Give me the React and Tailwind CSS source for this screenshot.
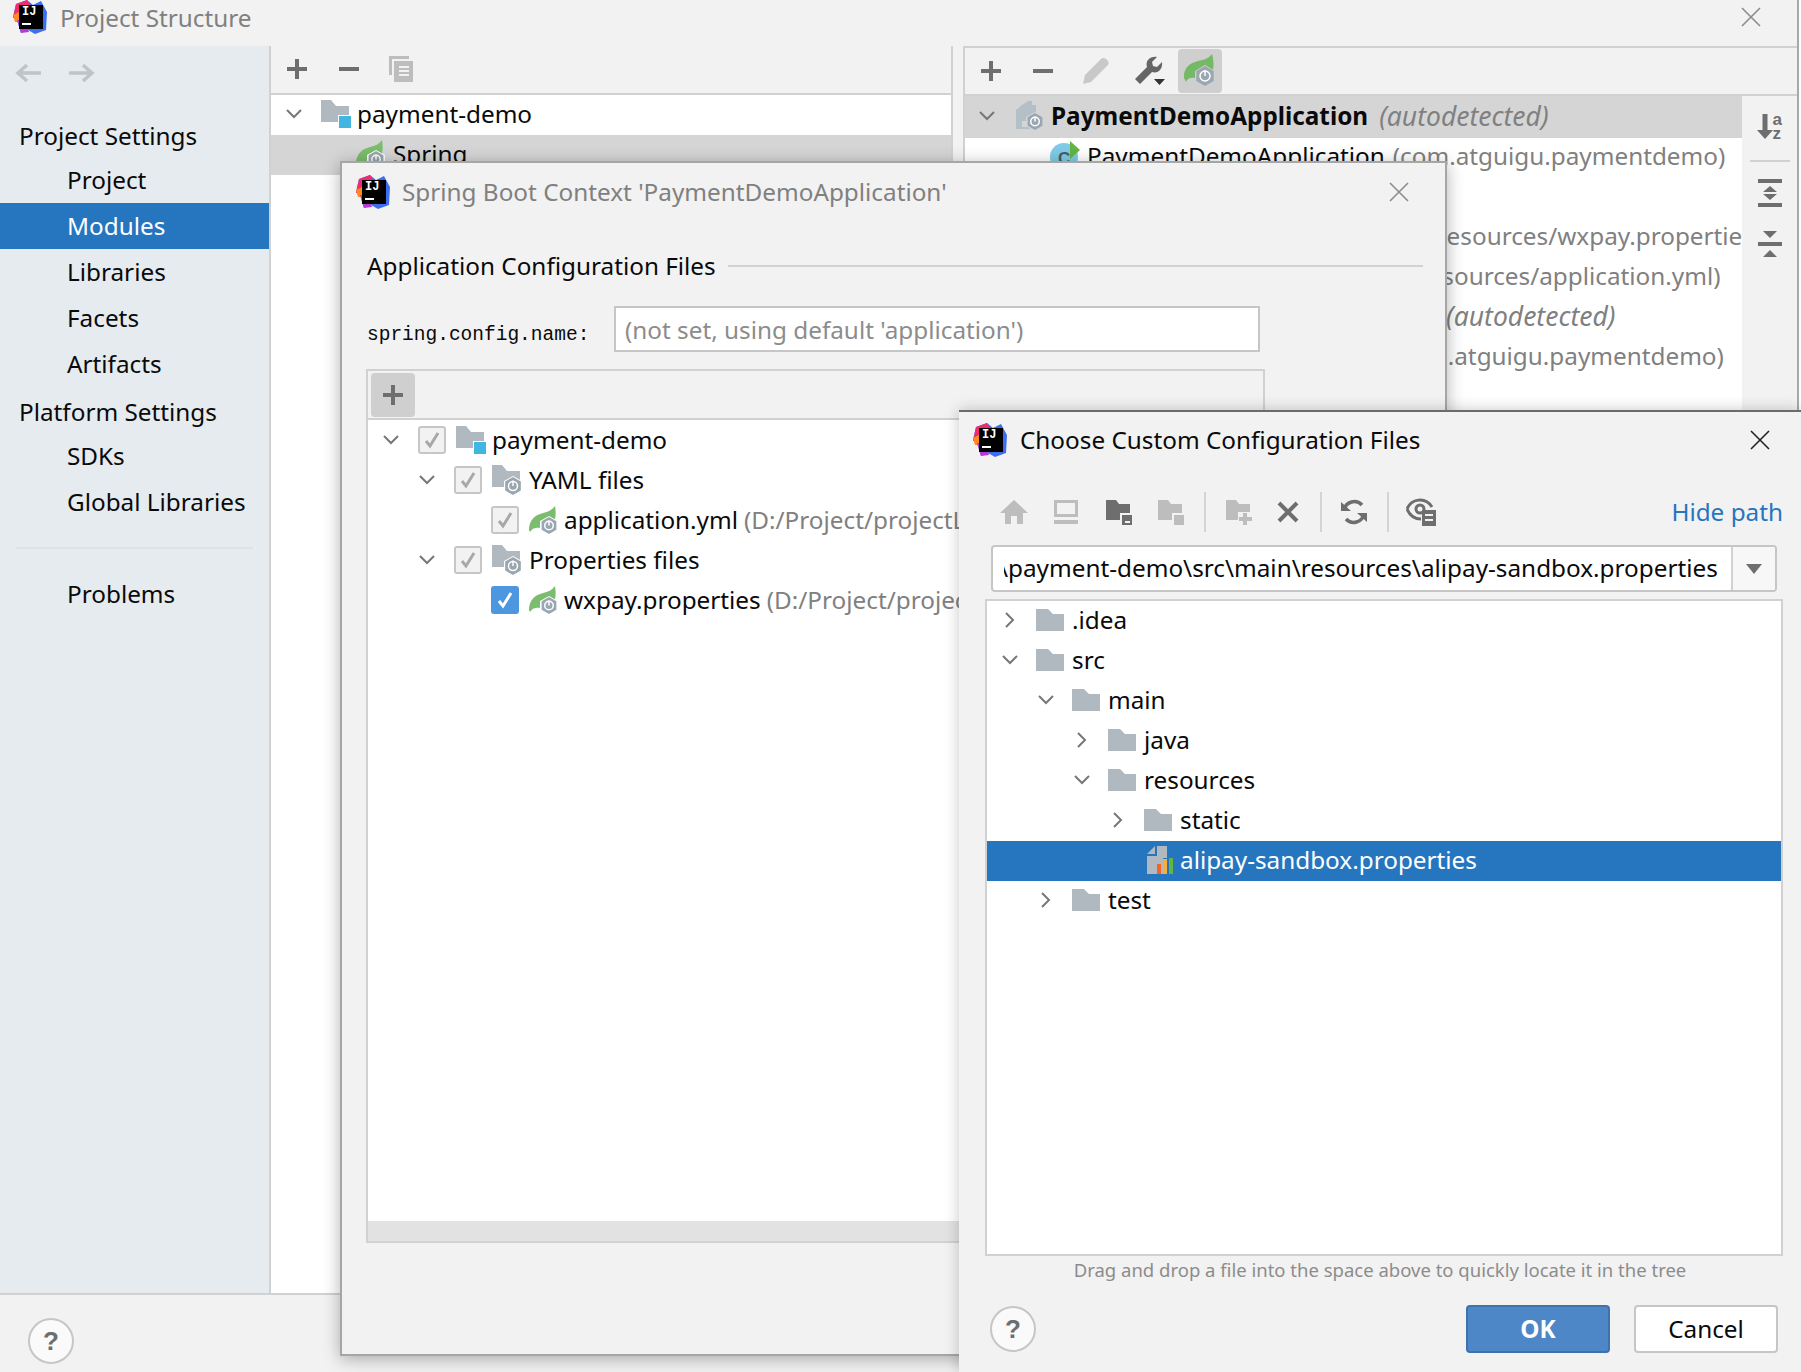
import { useState } from 'react';

const GRAY = '#6e6e6e';
const LIGHT = '#bdbdbd';

const Logo = () => (
    <span className="relative block w-[34px] h-[34px] shrink-0">
        <svg viewBox="0 0 34 34" className="absolute inset-0 w-full h-full">
            <path d="M3 4 L14 0 L20 5 L28 1 L34 12 L33 30 L22 34 L15 30 L8 33 L4 20 L0 17 Z" fill="#3b6ff0" />
            <path d="M3 4 L14 0 L18 6 L6 18 L0 18 Z" fill="#f02b6e" />
            <path d="M0 15 L6 12 L6 22 L2 22 Z" fill="#ff8a1f" />
            <path d="M4 20 L12 20 L16 32 L8 33 Z" fill="#b23ad6" />
            <rect x="6" y="5" width="24" height="24" fill="#000" />
            <rect x="9" y="23" width="9" height="2" fill="#fff" />
        </svg>
        <span className="absolute left-[9px] top-[5px] text-[12px] leading-[14px] font-bold text-white font-['Liberation_Mono',monospace]">IJ</span>
    </span>
);

const Close = ({ color = '#8c8c8c' }) => (
    <svg width="22" height="22" viewBox="0 0 22 22" className="shrink-0">
        <path d="M2 2 L20 20 M20 2 L2 20" stroke={color} strokeWidth="1.6" />
    </svg>
);

const Chevron = ({ open }) => (
    <svg width="18" height="18" viewBox="0 0 18 18" className="shrink-0">
        {open
            ? <path d="M2 5 L9 12 L16 5" fill="none" stroke="#777" strokeWidth="2" />
            : <path d="M5 2 L12 9 L5 16" fill="none" stroke="#777" strokeWidth="2" />}
    </svg>
);

const Folder = () => (
    <svg width="28" height="22" viewBox="0 0 28 22" className="shrink-0">
        <path d="M0 0 H12 L17 5 H28 V22 H0 Z" fill="#afb9bf" />
    </svg>
);

const ModuleFolder = () => (
    <svg width="30" height="28" viewBox="0 0 30 28" className="shrink-0">
        <path d="M0 0 H10 L15 6 H28 V22 H0 Z" fill="#afb9bf" />
        <rect x="17" y="15" width="13" height="13" fill="#fff" />
        <rect x="18" y="16" width="12" height="12" fill="#40b6e0" />
    </svg>
);

const Hex = ({ cx, cy, r = 9, fill = '#9aa7b0' }) => {
    const pts = [[0, -1], [0.87, -0.5], [0.87, 0.5], [0, 1], [-0.87, 0.5], [-0.87, -0.5]]
        .map(([x, y]) => `${cx + x * r},${cy + y * r}`).join(' ');
    return (
        <>
            <polygon points={pts} fill={fill} />
            <circle cx={cx} cy={cy} r={r * 0.5} fill="none" stroke="#fff" strokeWidth="1.5" />
            <path d={`M${cx} ${cy - r * 0.6} V${cy}`} stroke="#fff" strokeWidth="1.5" />
        </>
    );
};

const SpringFolder = () => (
    <svg width="30" height="30" viewBox="0 0 30 30" className="shrink-0">
        <path d="M0 0 H10 L15 6 H28 V22 H0 Z" fill="#afb9bf" />
        <polygon points="21,11 30,16 30,26 21,31 12,26 12,16" fill="#fff" />
        <Hex cx={21} cy={21} r={9} />
    </svg>
);

const Leaf = () => (
    <svg width="30" height="28" viewBox="0 0 30 28" className="shrink-0">
        <path d="M0 24 C0 14 6 9 14 7 C19 6 23 4 26 0 C27 6 27 12 25 16 L12 22 C7 21 3 22 1 26 Z" fill="#7bbd6e" />
        <polygon points="20,10 29,15 29,24 20,29 11,24 11,15" fill="#fff" />
        <Hex cx={20} cy={19.5} r={8.5} />
    </svg>
);

const BigLeaf = () => (
    <svg width="34" height="34" viewBox="0 0 34 34">
        <path d="M1 24 C0 14 7 9 15 7 C21 6 26 4 29 0 C31 7 31 14 29 19 L12 24 C7 23 4 25 3 28 Z" fill="#75b966" />
        <polygon points="22,11 32,17 32,27 22,33 12,27 12,17" fill="#d0d0d0" />
        <Hex cx={22} cy={22} r={10} />
    </svg>
);

const Doc = () => (
    <svg width="30" height="30" viewBox="0 0 30 30" className="shrink-0">
        <path d="M6 4 L12 0 H16 V4 H20 V20 H6 Z" fill="#b4c0c8" />
        <path d="M0 9 L6 4 V26 H14 V28 H0 Z" fill="#b4c0c8" />
        <polygon points="19,11 28,16 28,25 19,30 10,25 10,16" fill="#d5d5d5" />
        <Hex cx={19} cy={20.5} r={8.5} />
    </svg>
);

const ClassIcon = () => (
    <svg width="30" height="30" viewBox="0 0 30 30" className="shrink-0">
        <circle cx="14" cy="16" r="14" fill="#7fcbe8" />
        <path d="M20 0 L30 9 L20 18 Z" fill="#62b543" />
        <text x="8" y="23" fontSize="17" fontWeight="700" fill="#4a5a63" fontFamily="Liberation Sans, sans-serif">C</text>
    </svg>
);

const Plus = ({ color = GRAY }) => (
    <svg width="20" height="20" viewBox="0 0 20 20" className="shrink-0">
        <path d="M8 0 H12 V8 H20 V12 H12 V20 H8 V12 H0 V8 H8 Z" fill={color} />
    </svg>
);

const Minus = () => (
    <svg width="20" height="20" viewBox="0 0 20 20" className="shrink-0">
        <rect x="0" y="8" width="20" height="4" fill={GRAY} />
    </svg>
);

const Copy = () => (
    <svg width="24" height="26" viewBox="0 0 24 26" className="shrink-0">
        <path d="M0 0 H20 V3 H3 V19 H0 Z" fill={LIGHT} />
        <path d="M5 5 H24 V26 H5 Z" fill={LIGHT} />
        <path d="M10 11 H20 M10 15 H20 M10 19 H20" stroke="#f2f2f2" strokeWidth="2" />
    </svg>
);

const Pencil = () => (
    <svg width="28" height="28" viewBox="0 0 28 28" className="shrink-0">
        <path d="M1 27 L3 18 L19 2 Q21 0 24 2 Q28 5 26 8 L9 25 Z" fill="#c8c8c8" />
    </svg>
);

const WrenchIcon = () => (
    <svg width="32" height="30" viewBox="0 0 32 30" className="shrink-0">
        <path d="M1 23 L13 11 C11 5 16 0 23 1 L18 6 L19 10 L23 11 L28 6 C29 13 24 18 18 16 L6 28 Z" fill="#666" />
        <path d="M20 23 H31 L25.5 29 Z" fill="#333" />
    </svg>
);

const ArrowIcon = ({ flip }) => (
    <svg width="26" height="20" viewBox="0 0 26 20" className={flip ? 'shrink-0 -scale-x-100' : 'shrink-0'}>
        <path d="M12 2 L3 10 L12 18 M3 10 H26" fill="none" stroke="#bfc4c8" strokeWidth="3.5" />
    </svg>
);

const SortIcon = () => (
    <span className="relative block w-[26px] h-[26px]">
        <svg width="16" height="26" viewBox="0 0 16 26" className="absolute left-0 top-0">
            <path d="M5.5 0 H10.5 V16 H16 L8 25 L0 16 H5.5 Z" fill={GRAY} />
        </svg>
        <span className="absolute left-[16px] -top-[1px] text-[17px] leading-[14px] font-bold text-[#6e6e6e] font-['Liberation_Sans',sans-serif]">a<br />z</span>
    </span>
);

const ExpandIcon = () => (
    <svg width="24" height="28" viewBox="0 0 24 28">
        <rect width="24" height="4" fill={GRAY} />
        <rect y="24" width="24" height="4" fill={GRAY} />
        <path d="M12 7 L19 13 H5 Z M5 15 H19 L12 21 Z" fill={GRAY} />
    </svg>
);

const CollapseIcon = () => (
    <svg width="24" height="26" viewBox="0 0 24 26">
        <rect y="11" width="24" height="4" fill={GRAY} />
        <path d="M5 0 H19 L12 7 Z M12 19 L19 26 H5 Z" fill={GRAY} />
    </svg>
);

const Check = ({ on }) => (
    <span className={on
        ? 'w-[28px] h-[28px] shrink-0 rounded-[3px] bg-[#4c97e0] flex items-center justify-center'
        : 'w-[28px] h-[28px] shrink-0 rounded-[3px] border-2 border-[#c6c6c6] bg-[#f2f2f2] flex items-center justify-center'}>
        <svg width="18" height="18" viewBox="0 0 18 18">
            <path d="M3 10 L7 15 L15 2" fill="none" stroke={on ? '#fff' : '#a8a8a8'} strokeWidth="3" />
        </svg>
    </span>
);

const Help = () => (
    <span className="w-[46px] h-[46px] rounded-full border-2 border-[#c6c6c6] bg-[#fafafa] flex items-center justify-center text-[26px] font-bold text-[#6e6e6e] font-['Liberation_Sans',sans-serif]">?</span>
);

const IconFolderBadge = ({ color, badge }) => (
    <svg width="26" height="25" viewBox="0 0 26 25" className="shrink-0">
        <path d="M0 0 H10 L13 4 H24 V20 H0 Z" fill={color} />
        {badge === 'plus' && (
            <>
                <rect x="12" y="12" width="14" height="13" fill="#f2f2f2" />
                <path d="M17 13 H21 V17 H26 V21 H21 V25 H17 V21 H13 V17 H17 Z" fill={color} />
            </>
        )}
        {badge === 'square' && (
            <>
                <rect x="14" y="13" width="12" height="12" fill="#f2f2f2" />
                <rect x="16" y="15" width="10" height="10" fill={color} />
                {color === GRAY && <rect x="19" y="21" width="5" height="2" fill="#f2f2f2" />}
            </>
        )}
    </svg>
);

const Home = () => (
    <svg width="28" height="24" viewBox="0 0 28 24" className="shrink-0">
        <path d="M14 0 L28 13 H23 V24 H17 V16 H11 V24 H5 V13 H0 Z" fill={LIGHT} />
    </svg>
);

const Monitor = () => (
    <svg width="24" height="24" viewBox="0 0 24 24" className="shrink-0">
        <path d="M1.5 1.5 H22.5 V15.5 H1.5 Z" fill="none" stroke={LIGHT} strokeWidth="3" />
        <rect y="20" width="24" height="4" fill={LIGHT} />
    </svg>
);

const Cross = () => (
    <svg width="22" height="22" viewBox="0 0 22 22" className="shrink-0">
        <path d="M2 2 L20 20 M20 2 L2 20" stroke={GRAY} strokeWidth="4" />
    </svg>
);

const Refresh = () => (
    <svg width="26" height="26" viewBox="0 0 26 26" className="shrink-0">
        <path d="M3 11 A10.5 10.5 0 0 1 21 6" fill="none" stroke={GRAY} strokeWidth="3.5" />
        <path d="M23 15 A10.5 10.5 0 0 1 5 20" fill="none" stroke={GRAY} strokeWidth="3.5" />
        <path d="M0 3 L10 12 H0 Z M26 23 L16 14 H26 Z" fill={GRAY} />
    </svg>
);

const EyeDoc = () => (
    <svg width="30" height="28" viewBox="0 0 30 28" className="shrink-0">
        <path d="M1 11 C5 1 19 -2 26 9" fill="none" stroke={GRAY} strokeWidth="3" />
        <path d="M1 11 C4 18 9 21 15 21" fill="none" stroke={GRAY} strokeWidth="3" />
        <circle cx="14" cy="11" r="4" fill="none" stroke={GRAY} strokeWidth="3" />
        <rect x="16" y="12" width="14" height="16" fill={GRAY} />
        <path d="M19 17 H27 M19 22 H27" stroke="#f2f2f2" strokeWidth="2" />
    </svg>
);

const ToolSep = () => <span className="block w-[2px] h-[40px] bg-[#d4d4d4] shrink-0" />;

const Row = ({ className, children }) => (
    <div className={`h-[40px] flex items-center whitespace-nowrap ${className}`}>{children}</div>
);

const sidebarTop = ['Project', 'Modules', 'Libraries', 'Facets', 'Artifacts'];

const SideItem = ({ label, active }) => (
    <div className={active
        ? 'h-[46px] flex items-center pl-[67px] bg-[#2675bf] text-white'
        : 'h-[46px] flex items-center pl-[67px]'}>{label}</div>
);

function MainWindow() {
    return (
        <div className="w-[1797px] h-[1372px] flex flex-col bg-[#f2f2f2]">
            <div className="h-[46px] shrink-0 flex items-start pl-[13px] pr-[35px] pt-0">
                <Logo />
                <span className="ml-[13px] mt-[2px] text-[#808080]">Project Structure</span>
                <span className="ml-auto mt-[6px]"><Close /></span>
            </div>
            <div className="h-[1247px] shrink-0 flex">
                <div className="w-[271px] shrink-0 bg-[#e6ebef] border-r-2 border-[#d1d1d1]">
                    <div className="h-[68px] flex items-center gap-[28px] pl-[15px] pb-[14px]">
                        <ArrowIcon />
                        <ArrowIcon flip />
                    </div>
                    <div className="h-[43px] flex items-center pl-[19px] pt-[1px]">Project Settings</div>
                    {sidebarTop.map(label => <SideItem key={label} label={label} active={label === 'Modules'} />)}
                    <div className="h-[46px] flex items-center pl-[19px] pt-[4px]">Platform Settings</div>
                    <SideItem label="SDKs" />
                    <SideItem label="Global Libraries" />
                    <div className="h-[2px] my-[22px] mx-[16px] bg-[#dde2e6]" />
                    <SideItem label="Problems" />
                </div>

                <div className="w-[682px] shrink-0 flex flex-col border-r-2 border-[#d1d1d1]">
                    <div className="h-[49px] shrink-0 flex items-center pl-[16px] pb-[2px] border-b-2 border-[#d1d1d1]">
                        <Plus />
                        <span className="ml-[32px]"><Minus /></span>
                        <span className="ml-[30px]"><Copy /></span>
                    </div>
                    <div className="flex-1 bg-white">
                        <Row className="pl-[14px] pb-[2px]">
                            <Chevron open />
                            <span className="ml-[18px]"><ModuleFolder /></span>
                            <span className="ml-[6px]">payment-demo</span>
                        </Row>
                        <Row className="pl-[85px] pb-[2px] bg-[#d5d5d5]">
                            <Leaf />
                            <span className="ml-[7px]">Spring</span>
                        </Row>
                    </div>
                </div>

                <div className="flex-1 ml-[10px] flex flex-col border-l-2 border-[#d1d1d1] min-w-0">
                    <div className="h-[50px] shrink-0 flex items-center pl-[16px] border-t-2 border-b-2 border-[#d1d1d1]">
                        <Plus />
                        <span className="ml-[32px]"><Minus /></span>
                        <span className="ml-[29px]"><Pencil /></span>
                        <span className="ml-[24px]"><WrenchIcon /></span>
                        <span className="ml-[12px] w-[44px] h-[44px] rounded-[4px] bg-[#cfcfcf] flex items-center justify-center"><BigLeaf /></span>
                    </div>
                    <div className="flex-1 flex min-h-0">
                        <div className="w-[777px] shrink-0 bg-white overflow-hidden">
                            <div className="h-[42px] flex items-center pl-[13px] pb-[2px] bg-[#d5d5d5] whitespace-nowrap">
                                <Chevron open />
                                <span className="ml-[20px]"><Doc /></span>
                                <span className="ml-[5px] font-bold">PaymentDemoApplication</span>
                                <span className="ml-[11px] italic text-[26.5px] text-[#808080]">(autodetected)</span>
                            </div>
                            <Row className="pl-[85px] pb-[4px]">
                                <ClassIcon />
                                <span className="ml-[7px]">PaymentDemoApplication</span>
                                <span className="ml-[8px] text-[#808080]">(com.atguigu.paymentdemo)</span>
                            </Row>
                            <Row className="pl-[85px]" />
                            <Row className="pl-[463px] pb-[4px] text-[#808080]">/resources/wxpay.properties)</Row>
                            <Row className="pl-[445px] pb-[4px] text-[#808080]">/resources/application.yml)</Row>
                            <Row className="pl-[481px] pb-[4px] italic text-[26.5px] text-[#808080]">(autodetected)</Row>
                            <Row className="pl-[460px] pb-[4px] text-[#808080]">m.atguigu.paymentdemo)</Row>
                        </div>
                        <div className="flex-1 flex flex-col items-center pt-[18px]">
                            <SortIcon />
                            <span className="w-[40px] h-[2px] bg-[#d1d1d1] mt-[20px]" />
                            <span className="mt-[17px]"><ExpandIcon /></span>
                            <span className="mt-[24px]"><CollapseIcon /></span>
                        </div>
                    </div>
                </div>
            </div>
            <div className="flex-1 border-t-2 border-[#d1d1d1] pl-[28px] pt-[23px]">
                <Help />
            </div>
        </div>
    );
}

function ContextDialog() {
    return (
        <div className="absolute left-[340px] top-[161px] w-[1107px] h-[1195px] bg-[#f2f2f2] border-2 border-[#a6a6a6] shadow-[0_3px_16px_rgba(0,0,0,0.3)] flex flex-col">
            <div className="h-[58px] shrink-0 flex items-center pl-[14px] pr-[35px]">
                <Logo />
                <span className="ml-[12px] text-[#808080]">Spring Boot Context 'PaymentDemoApplication'</span>
                <span className="ml-auto"><Close /></span>
            </div>
            <div className="h-[44px] shrink-0 mt-[23px] flex items-center pl-[25px] pr-[22px] gap-[12px]">
                <span className="whitespace-nowrap">Application Configuration Files</span>
                <span className="flex-1 h-[2px] bg-[#d1d1d1]" />
            </div>
            <div className="mt-[18px] flex items-center pl-[25px]">
                <span className="w-[247px] font-['Liberation_Mono',monospace] text-[19.5px] pt-[12px]">spring.config.name:</span>
                <div className="w-[646px] h-[46px] bg-white border-2 border-[#c6c6c6] flex items-center pl-[9px] pt-[2px] text-[#8c8c8c]">(not set, using default 'application')</div>
            </div>
            <div className="ml-[24px] mt-[17px] w-[899px] h-[874px] border-2 border-[#d1d1d1] flex flex-col">
                <div className="h-[49px] shrink-0 px-[3px] pt-[2px] border-b-2 border-[#d1d1d1]">
                    <span className="w-[44px] h-[44px] rounded-[4px] bg-[#cfcfcf] flex items-center justify-center"><Plus /></span>
                </div>
                <div className="flex-1 bg-white overflow-hidden">
                    <Row className="pl-[14px]">
                        <Chevron open />
                        <span className="ml-[18px]"><Check /></span>
                        <span className="ml-[10px]"><ModuleFolder /></span>
                        <span className="ml-[6px]">payment-demo</span>
                    </Row>
                    <Row className="pl-[50px]">
                        <Chevron open />
                        <span className="ml-[18px]"><Check /></span>
                        <span className="ml-[10px]"><SpringFolder /></span>
                        <span className="ml-[7px]">YAML files</span>
                    </Row>
                    <Row className="pl-[123px]">
                        <Check />
                        <span className="ml-[10px]"><Leaf /></span>
                        <span className="ml-[5px]">application.yml</span>
                        <span className="ml-[6px] text-[#808080]">(D:/Project/projectLearn/payment-demo)</span>
                    </Row>
                    <Row className="pl-[50px]">
                        <Chevron open />
                        <span className="ml-[18px]"><Check /></span>
                        <span className="ml-[10px]"><SpringFolder /></span>
                        <span className="ml-[7px]">Properties files</span>
                    </Row>
                    <Row className="pl-[123px]">
                        <Check on />
                        <span className="ml-[10px]"><Leaf /></span>
                        <span className="ml-[5px]">wxpay.properties</span>
                        <span className="ml-[6px] text-[#808080]">(D:/Project/projectLearn/payment-demo)</span>
                    </Row>
                </div>
                <div className="h-[20px] shrink-0 bg-[#e2e2e2]" />
            </div>
        </div>
    );
}

const files = [
    { label: '.idea', className: 'pl-[14px] pb-[2px]' },
    { label: 'src', open: true, className: 'pl-[14px] pb-[2px]' },
    { label: 'main', open: true, className: 'pl-[50px] pb-[2px]' },
    { label: 'java', className: 'pl-[86px] pb-[2px]' },
    { label: 'resources', open: true, className: 'pl-[86px] pb-[2px]' },
    { label: 'static', className: 'pl-[122px] pb-[2px]' },
];

function ChooseDialog() {
    const [path] = useState('\\payment-demo\\src\\main\\resources\\alipay-sandbox.properties');
    return (
        <div className="absolute left-[959px] top-[410px] w-[842px] h-[962px] bg-[#f2f2f2] border-t-2 border-[#6b6b6b] shadow-[0_0_14px_rgba(0,0,0,0.22)] flex flex-col">
            <div className="h-[57px] shrink-0 flex items-center pl-[14px] pr-[30px] pb-[2px]">
                <Logo />
                <span className="ml-[13px]">Choose Custom Configuration Files</span>
                <span className="ml-auto"><Close color="#222" /></span>
            </div>
            <div className="h-[76px] shrink-0 flex items-center pt-[10px] pl-[41px] pr-[18px]">
                <Home />
                <span className="ml-[26px]"><Monitor /></span>
                <span className="ml-[28px]"><IconFolderBadge color={GRAY} badge="square" /></span>
                <span className="ml-[26px]"><IconFolderBadge color={LIGHT} badge="square" /></span>
                <span className="ml-[20px]"><ToolSep /></span>
                <span className="ml-[20px]"><IconFolderBadge color={LIGHT} badge="plus" /></span>
                <span className="ml-[25px]"><Cross /></span>
                <span className="ml-[21px]"><ToolSep /></span>
                <span className="ml-[19px]"><Refresh /></span>
                <span className="ml-[20px]"><ToolSep /></span>
                <span className="ml-[17px]"><EyeDoc /></span>
                <span className="ml-auto text-[#2675bf]">Hide path</span>
            </div>
            <div className="ml-[32px] w-[786px] h-[47px] shrink-0 rounded-[4px] border-2 border-[#c6c6c6] bg-white flex items-center overflow-hidden">
                <div className="flex-1 min-w-0 ml-[11px] overflow-hidden whitespace-nowrap">
                    <span className="block -ml-[5px] pb-[2px]">{path}</span>
                </div>
                <div className="w-[44px] h-full shrink-0 border-l-2 border-[#d1d1d1] bg-[#f7f7f7] flex items-center justify-center">
                    <svg width="16" height="10" viewBox="0 0 16 10"><path d="M0 0 H16 L8 10 Z" fill={GRAY} /></svg>
                </div>
            </div>
            <div className="ml-[26px] w-[798px] h-[657px] shrink-0 mt-[7px] border-2 border-[#d1d1d1] bg-white">
                {files.map(f => (
                    <Row key={f.label} className={f.className}>
                        <Chevron open={f.open} />
                        <span className="ml-[17px]"><Folder /></span>
                        <span className="ml-[8px]">{f.label}</span>
                    </Row>
                ))}
                <Row className="pl-[160px] pb-[2px] bg-[#2675bf] text-white">
                    <svg width="26" height="28" viewBox="0 0 26 28" className="shrink-0">
                        <path d="M0 8 L8 0 V8 Z M10 0 H20 V12 H16 V28 H0 V10 H10 Z" fill="#afb9bf" />
                        <rect x="10" y="18" width="4" height="10" fill="#f26522" />
                        <rect x="16" y="13" width="4" height="15" fill="#f4af3d" />
                        <rect x="22" y="12" width="4" height="16" fill="#62b543" />
                    </svg>
                    <span className="ml-[7px]">alipay-sandbox.properties</span>
                </Row>
                <Row className="pl-[50px] pb-[2px]">
                    <Chevron />
                    <span className="ml-[17px]"><Folder /></span>
                    <span className="ml-[8px]">test</span>
                </Row>
            </div>
            <div className="h-[28px] shrink-0 flex items-center justify-center text-[18.5px] text-[#8c8c8c]">Drag and drop a file into the space above to quickly locate it in the tree</div>
            <div className="flex items-center pl-[31px] pr-[23px] mt-[21px]">
                <Help />
                <button className="ml-auto w-[144px] h-[48px] rounded-[4px] bg-[#4d87c7] border-2 border-[#3f72ad] text-white font-bold">OK</button>
                <button className="ml-[24px] w-[144px] h-[48px] rounded-[4px] bg-white border-2 border-[#c6c6c6]">Cancel</button>
            </div>
        </div>
    );
}

export default function App() {
    return (
        <div className="relative w-[1801px] h-[1372px] overflow-hidden bg-white text-[24.3px] leading-[32px] text-[#0a0a0a] font-['Noto_Sans',sans-serif]">
            <div className="border-r-2 border-[#a8a8a8] w-[1799px]">
                <MainWindow />
            </div>
            <ContextDialog />
            <ChooseDialog />
        </div>
    );
}
